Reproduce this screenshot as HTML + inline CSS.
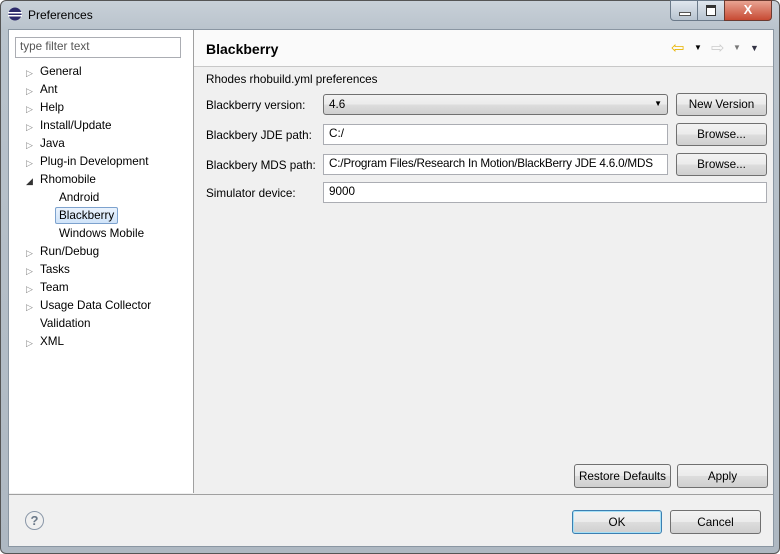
<!DOCTYPE html><html><head><style>
body{margin:0;width:780px;height:554px;overflow:hidden;font-family:"Liberation Sans",sans-serif;font-size:11.7px;color:#000;background:#fff}
.win{position:absolute;left:0;top:0;width:778px;height:552px;border:1px solid #555;border-radius:6px;background:linear-gradient(#c8d0d8,#b9c3cc 30px,#aeb8c2);}
.title{position:absolute;left:28px;top:8px;font-size:12px}
.in{position:absolute;left:7px;top:28px;width:764px;height:516px;background:#f0f0f0;border:1px solid #8a96a2}
.abs{position:absolute}
.left{left:0;top:0;width:184px;height:463px;background:#fff;border-right:1px solid #a0a0a0}
.tree div{position:absolute;left:31px}
.tw{position:absolute;left:17px;color:#888;font-size:9px}
.field{background:#fff;border:1px solid #abadb3;height:19px;box-sizing:border-box;padding:2px 5px;white-space:nowrap;overflow:hidden}
.btn{border:1px solid #707070;border-radius:3px;background:linear-gradient(#f2f2f2,#ebebeb 50%,#dddddd 51%,#cfcfcf);text-align:center;box-sizing:border-box}
</style></head><body>
<div class="win">
<svg class="abs" style="left:7px;top:6px" width="14" height="14"><circle cx="7" cy="7" r="6.5" fill="#2c2a6b"/><rect x="0" y="5" width="14" height="1.5" fill="#fff"/><rect x="0" y="8" width="14" height="1.5" fill="#fff"/></svg>
<div class="title" style="left:27px;top:7px">Preferences</div>
<div class="abs" style="left:669px;top:-1px;width:26px;height:19px;border:1px solid #6b7a8a;border-radius:0 0 0 4px;background:linear-gradient(#dfe6ee,#b8c4d0)"><div class="abs" style="left:8px;top:11px;width:10px;height:2px;background:#fff;border:1px solid #555"></div></div>
<div class="abs" style="left:696px;top:-1px;width:26px;height:19px;border:1px solid #6b7a8a;background:linear-gradient(#dfe6ee,#b8c4d0)"><div class="abs" style="left:8px;top:4px;width:8px;height:7px;border:1px solid #333;border-top-width:3px;background:#fff"></div></div>
<div class="abs" style="left:723px;top:-1px;width:46px;height:19px;border:1px solid #6b3a30;border-radius:0 0 4px 0;background:linear-gradient(#e8a493,#c74a33);color:#fff;font-weight:bold;text-align:center;font-size:13px;line-height:18px">X</div>
<div class="in">
<div class="abs left">
<div class="abs" style="left:6px;top:7px;width:166px;height:21px;border:1px solid #abadb3;box-sizing:border-box;padding:2px 4px;color:#555">type filter text</div>
<div class="tree">
<span class="tw" style="top:38px">▷</span><div style="top:35px">General</div>
<span class="tw" style="top:56px">▷</span><div style="top:53px">Ant</div>
<span class="tw" style="top:74px">▷</span><div style="top:71px">Help</div>
<span class="tw" style="top:92px">▷</span><div style="top:89px">Install/Update</div>
<span class="tw" style="top:110px">▷</span><div style="top:107px">Java</div>
<span class="tw" style="top:128px">▷</span><div style="top:125px">Plug-in Development</div>
<span class="tw" style="top:146px;color:#333">◢</span><div style="top:143px">Rhomobile</div>
<div style="top:161px;left:50px">Android</div>
<div style="top:177px;left:46px;padding:1px 3px;border:1px solid #7da2ce;border-radius:2px;background:linear-gradient(#eaf3fd,#d0e4f9)">Blackberry</div>
<div style="top:197px;left:50px">Windows Mobile</div>
<span class="tw" style="top:218px">▷</span><div style="top:215px">Run/Debug</div>
<span class="tw" style="top:236px">▷</span><div style="top:233px">Tasks</div>
<span class="tw" style="top:254px">▷</span><div style="top:251px">Team</div>
<span class="tw" style="top:272px">▷</span><div style="top:269px">Usage Data Collector</div>
<div style="top:287px">Validation</div>
<span class="tw" style="top:308px">▷</span><div style="top:305px">XML</div>
</div></div>
<div class="abs" style="left:185px;top:0;width:579px;height:36px;background:#fafafa;border-bottom:1px solid #c8c8c8"></div>
<div class="abs" style="left:197px;top:11px;font-weight:bold;font-size:14px">Blackberry</div>
<div class="abs" style="left:662px;top:8px;color:#e8b400;font-size:16px">⇦</div>
<div class="abs" style="left:685px;top:13px;font-size:8px">▼</div>
<div class="abs" style="left:702px;top:8px;color:#ccc;font-size:16px">⇨</div>
<div class="abs" style="left:724px;top:13px;font-size:8px;color:#777">▼</div>
<div class="abs" style="left:741px;top:13px;font-size:9px;color:#334">▼</div>
<div class="abs" style="left:197px;top:43px">Rhodes rhobuild.yml preferences</div>
<div class="abs" style="left:197px;top:69px">Blackberry version:</div>
<div class="abs btn" style="left:314px;top:64px;width:345px;height:21px;text-align:left;padding:3px 5px">4.6<span style="position:absolute;right:5px;top:4px;font-size:8px">▼</span></div>
<div class="abs btn" style="left:667px;top:63px;width:91px;height:23px;padding-top:4px">New Version</div>
<div class="abs" style="left:197px;top:99px">Blackbery JDE path:</div>
<div class="abs field" style="left:314px;top:94px;width:345px;height:21px">C:/</div>
<div class="abs btn" style="left:667px;top:93px;width:91px;height:23px;padding-top:4px">Browse...</div>
<div class="abs" style="left:197px;top:129px">Blackbery MDS path:</div>
<div class="abs field" style="left:314px;top:124px;width:345px;height:21px;letter-spacing:-0.2px">C:/Program Files/Research In Motion/BlackBerry JDE 4.6.0/MDS</div>
<div class="abs btn" style="left:667px;top:123px;width:91px;height:23px;padding-top:4px">Browse...</div>
<div class="abs" style="left:197px;top:157px">Simulator device:</div>
<div class="abs field" style="left:314px;top:152px;width:444px;height:21px">9000</div>
<div class="abs btn" style="left:565px;top:434px;width:97px;height:24px;padding-top:5px">Restore Defaults</div>
<div class="abs btn" style="left:668px;top:434px;width:91px;height:24px;padding-top:5px">Apply</div>
<div class="abs" style="left:0;top:464px;width:764px;height:1px;background:#a0a0a0"></div>
<div class="abs" style="left:16px;top:481px;width:17px;height:17px;border:1.5px solid #8a97a8;border-radius:50%;text-align:center;font-weight:bold;color:#6a7888;font-size:13px;line-height:17px">?</div>
<div class="abs btn" style="left:563px;top:480px;width:90px;height:24px;padding-top:5px;border-color:#3c7fb1;box-shadow:inset 0 0 0 1px #a6e0f6">OK</div>
<div class="abs btn" style="left:661px;top:480px;width:91px;height:24px;padding-top:5px">Cancel</div>
</div></div>
</body></html>
